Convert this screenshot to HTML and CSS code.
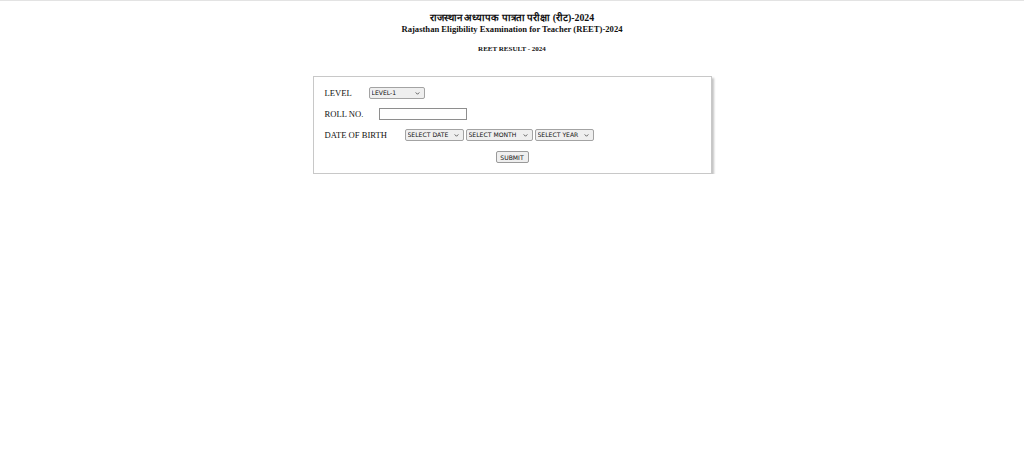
FILE: index.html
```html
<!DOCTYPE html>
<html>
<head>
<meta charset="utf-8">
<link rel="stylesheet" href="styles.css">
</head>
<body>
<div class="topline"></div>
<header class="head">
  <div class="hindi">राजस्थान अध्यापक पात्रता परीक्षा (रीट)-2024</div>
  <div class="eng">Rajasthan Eligibility Examination for Teacher (REET)-2024</div>
  <div class="sub">REET RESULT - 2024</div>
</header>
<form class="card">
  <div class="row">
    <span class="lbl lbl-level">LEVEL</span>
    <span class="sel w-level"><select><option>LEVEL-1</option></select><svg class="chev" viewBox="0 0 6 4" width="5" height="3"><path d="M0.6 0.6 L3 3 L5.4 0.6" fill="none" stroke="#333" stroke-width="1"/></svg></span>
  </div>
  <div class="row">
    <span class="lbl lbl-roll">ROLL NO.</span>
    <input class="inp" type="text">
  </div>
  <div class="row">
    <span class="lbl lbl-dob">DATE OF BIRTH</span>
    <div class="dob">
      <span class="sel w-date"><select><option>SELECT DATE</option></select><svg class="chev" viewBox="0 0 6 4" width="5" height="3"><path d="M0.6 0.6 L3 3 L5.4 0.6" fill="none" stroke="#333" stroke-width="1"/></svg></span>
      <span class="sel w-month"><select><option>SELECT MONTH</option></select><svg class="chev" viewBox="0 0 6 4" width="5" height="3"><path d="M0.6 0.6 L3 3 L5.4 0.6" fill="none" stroke="#333" stroke-width="1"/></svg></span>
      <span class="sel w-year"><select><option>SELECT YEAR</option></select><svg class="chev" viewBox="0 0 6 4" width="5" height="3"><path d="M0.6 0.6 L3 3 L5.4 0.6" fill="none" stroke="#333" stroke-width="1"/></svg></span>
    </div>
  </div>
  <div class="row row-submit">
    <button type="button" class="btn">SUBMIT</button>
  </div>
</form>
</body>
</html>
```
FILE: styles.css
```css
html, body {
  margin: 0;
  padding: 0;
  background: #fff;
}
body {
  font-family: "Liberation Serif", "Times New Roman", serif;
  color: #111;
}
.topline {
  height: 1px;
  background: #e3e3e3;
}
.head {
  text-align: center;
  padding-top: 11px;
}
.hindi {
  font-weight: bold;
  font-size: 9.9px;
  line-height: 12px;
}
.eng {
  font-weight: bold;
  font-size: 8.6px;
  line-height: 10px;
}
.sub {
  font-weight: bold;
  font-size: 7px;
  line-height: 8px;
  margin-top: 11px;
}
.card {
  width: 375px;
  margin: 23px auto 0;
  padding: 10px 11px 10px 11px;
  border: 1px solid #c8c8c8;
  box-shadow: 2px 2px 2px #c4c4c4;
  display: flex;
  flex-direction: column;
  gap: 9px;
}
.row {
  display: flex;
  align-items: center;
  height: 12px;
}
.row-submit {
  justify-content: center;
  margin-top: 1px;
}
.lbl {
  font-size: 8.6px;
}
.lbl-level { width: 44px; }
.lbl-roll { width: 54px; }
.lbl-dob { width: 80px; }
.dob {
  display: flex;
  gap: 2px;
}
.sel {
  display: inline-flex;
  align-items: center;
  height: 12px;
  box-sizing: border-box;
  border: 1px solid #a3a3a3;
  border-radius: 2px;
  background: #efefef;
  padding: 0 4px 0 2px;
}
.sel select {
  appearance: none;
  -webkit-appearance: none;
  border: 0;
  background: transparent;
  font-family: "DejaVu Sans", Verdana, sans-serif;
  font-size: 6.1px;
  color: #111;
  padding: 0;
  margin: 0;
  height: 10px;
  line-height: 10px;
  flex: 1;
  min-width: 0;
  outline: none;
}
.chev {
  display: block;
  flex: none;
}
.w-level { width: 56px; }
.w-date { width: 59px; }
.w-month { width: 67px; }
.w-year { width: 59px; }
.inp {
  width: 88px;
  height: 12px;
  box-sizing: border-box;
  border: 1px solid #8e8e8e;
  padding: 0;
  margin: 0;
}
.btn {
  font-family: "DejaVu Sans", Verdana, sans-serif;
  font-size: 6.1px;
  height: 12px;
  width: 33px;
  padding: 0;
  border: 1px solid #9a9a9a;
  border-radius: 2px;
  background: #efefef;
  color: #111;
  box-sizing: border-box;
}
```
